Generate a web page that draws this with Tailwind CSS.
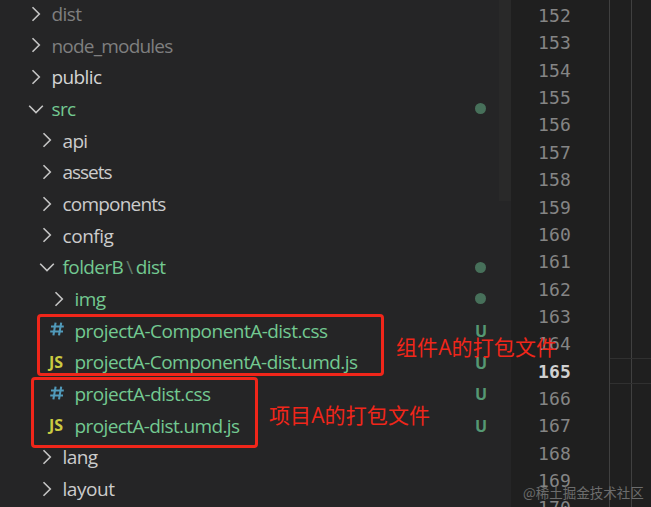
<!DOCTYPE html>
<html lang="zh">
<head>
    <meta charset="UTF-8">
    <meta name="viewport" content="width=device-width, initial-scale=1.0">
    <title>Explorer</title>
    <script src="https://cdn.jsdelivr.net/npm/@tailwindcss/browser@4"></script>
</head>
<body class="w-[651px] h-[507px] overflow-hidden bg-[#1f1f1f]">
    <svg class="hidden">
        <symbol id="right" viewBox="0 0 16 16"><path d="M4.5 1.2 11.3 8 4.5 14.8" fill="none" stroke="currentColor" stroke-width="1.6"/></symbol>
        <symbol id="down" viewBox="0 0 16 16"><path d="M1.2 4.7 8 11.5 14.8 4.7" fill="none" stroke="currentColor" stroke-width="1.6"/></symbol>
    </svg>

    <div class="relative flex w-full h-full overflow-hidden">
        <!-- File tree -->
        <aside id="tree" class="relative w-[511px] shrink-0 bg-[#252526] -mt-[2px] font-['Open_Sans','Noto_Sans',sans-serif] text-[19px] text-[#cccccc]">
            <div class="absolute right-0 top-0 w-3 h-[203px] bg-[#292929]"></div>
        </aside>

        <!-- Editor gutter and indent guides -->
        <main class="relative flex grow">
            <div id="gutter" class="w-[98px] shrink-0 pl-[27px] pt-[2px] font-['DejaVu_Sans_Mono',monospace] text-[18px] text-[#858585] tracking-[0.15px]"></div>
            <div class="grow flex border-l border-[#404040]">
                <div class="w-[22px] border-r border-[#404040]"></div>
            </div>
            <div class="absolute left-[99px] right-0 top-[358px] h-[26px] border-y border-[#303030]"></div>
        </main>

        <!-- Annotations -->
        <div class="absolute left-[37px] top-[314px] w-[347px] h-[62px] border-3 border-[#f0261a] rounded-[4px]"></div>
        <div class="absolute left-[31px] top-[377px] w-[227px] h-[71px] border-3 border-[#f0261a] rounded-[4px]"></div>
        <div class="absolute left-[396px] top-[332px] leading-[30px] text-[21px] tracking-[0.1px] whitespace-nowrap text-[#f0261a] font-['Open_Sans','Noto_Sans_CJK_SC',sans-serif]">组件A的打包文件</div>
        <div class="absolute left-[269px] top-[400px] leading-[30px] text-[21px] tracking-[0.1px] whitespace-nowrap text-[#f0261a] font-['Open_Sans','Noto_Sans_CJK_SC',sans-serif]">项目A的打包文件</div>
        <div class="absolute left-[523px] top-[482px] leading-[20px] text-[13.5px] whitespace-nowrap text-[#6c6c6c] font-['Noto_Sans_CJK_SC',sans-serif]">@稀土掘金技术社区</div>
    </div>

    <script>
        // w is the width of the label in pixels
        const rows = [
            { icon: 'right', pad: 28, name: 'dist', w: 30, color: 'text-[#7f7f7f]' },
            { icon: 'right', pad: 28, name: 'node_modules', w: 121, color: 'text-[#7f7f7f]' },
            { icon: 'right', pad: 28, name: 'public', w: 50, color: 'text-[#d4d4d4]' },
            { icon: 'down', pad: 28, name: 'src', w: 24, color: 'text-[#73c991]', mark: 'dot' },
            { icon: 'right', pad: 39, name: 'api', w: 25 },
            { icon: 'right', pad: 39, name: 'assets', w: 49 },
            { icon: 'right', pad: 39, name: 'components', w: 103 },
            { icon: 'right', pad: 39, name: 'config', w: 51 },
            { icon: 'down', pad: 39, name: 'folderB<span class="px-[3px] text-[#5f7566]">\\</span>dist', w: 103, color: 'text-[#73c991]', mark: 'dot' },
            { icon: 'right', pad: 51, name: 'img', w: 31, color: 'text-[#73c991]', mark: 'dot' },
            { icon: 'css', pad: 51, name: 'projectA-ComponentA-dist.css', w: 253, color: 'text-[#73c991]', mark: 'U' },
            { icon: 'js', pad: 51, name: 'projectA-ComponentA-dist.umd.js', w: 283, color: 'text-[#73c991]', mark: 'U' },
            { icon: 'css', pad: 51, name: 'projectA-dist.css', w: 136, color: 'text-[#73c991]', mark: 'U' },
            { icon: 'js', pad: 51, name: 'projectA-dist.umd.js', w: 165, color: 'text-[#73c991]', mark: 'U' },
            { icon: 'right', pad: 39, name: 'lang', w: 35 },
            { icon: 'right', pad: 39, name: 'layout', w: 52 }
        ];

        const icons = {
            right: '<svg class="w-4 h-4 text-[#c5c5c5]"><use href="#right"/></svg>',
            down: '<svg class="w-4 h-4 text-[#c5c5c5]"><use href="#down"/></svg>',
            css: `<svg class="w-4 h-4 -ml-[2px] -mt-[2px] text-[#519aba]" viewBox="0 0 16 16"><path d="M6.6 1.6 4.4 14.4M12.2 1.6 10 14.4M2 5.5H14.8M1.2 10.5H14" fill="none" stroke="currentColor" stroke-width="2.1"/></svg>`,
            js: `<span class="-ml-[2px] -mt-[1px] leading-none text-[16px] font-bold text-[#cbcb41]">JS</span>`
        };

        const marks = {
            dot: '<span class="w-[11px] h-[11px] rounded-full bg-[#47705a]"></span>',
            U: `<span class="pl-px pt-px text-[16px] font-bold text-[#559873]">U</span>`
        };

        const tree = document.getElementById('tree');
        rows.forEach(row => {
            const el = document.createElement('div');
            el.className = 'relative flex items-center h-[31.67px] pr-[24px] whitespace-nowrap';
            el.style.paddingLeft = row.pad + 'px';
            el.innerHTML = `
                <span class="w-[23.5px] shrink-0 flex items-center">${icons[row.icon]}</span>
                <span class="label pt-px ${row.color || ''}">${row.name}</span>
                <span class="ml-auto w-[13px] flex justify-center">${marks[row.mark] || ''}</span>`;
            tree.appendChild(el);
        });

        // Spread the letters over the label width
        function fitLabels() {
            document.querySelectorAll('.label').forEach((label, i) => {
                label.style.letterSpacing = '0px';
                const count = label.textContent.length;
                label.style.letterSpacing = (rows[i].w - label.getBoundingClientRect().width) / count + 'px';
            });
        }
        window.addEventListener('load', () => requestAnimationFrame(fitLabels));

        const gutter = document.getElementById('gutter');
        for (let n = 152; n <= 170; n++) {
            const line = document.createElement('div');
            line.className = n === 165 ? 'h-[27.37px] leading-[27px] font-bold text-[#d0d0d0]' : 'h-[27.37px] leading-[27px]';
            line.textContent = n;
            gutter.appendChild(line);
        }
    </script>
</body>
</html>
